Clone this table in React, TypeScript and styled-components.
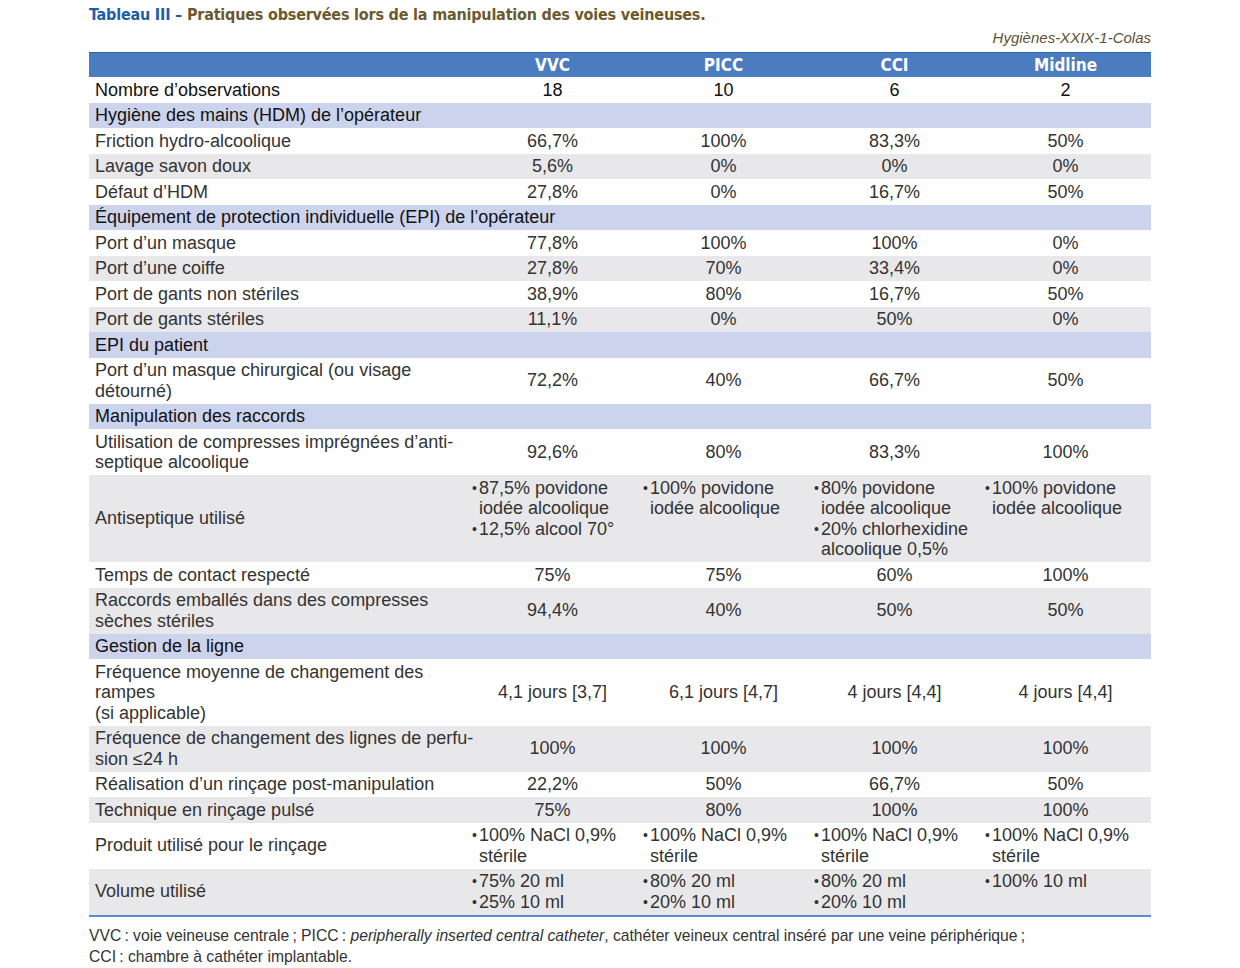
import React from "react";
import styled, { createGlobalStyle } from "styled-components";

const GlobalStyle = createGlobalStyle`
  html, body { margin: 0; padding: 0; background: #ffffff; }
  body { font-family: "Liberation Sans", Arial, sans-serif; color: #2b2b2b; }
`;

const Page = styled.div`
  width: 1062px;
  padding: 4px 0 0 89px;
`;

const Title = styled.h1`
  margin: 0;
  font-family: "DejaVu Sans Condensed", "Liberation Sans", sans-serif;
  font-stretch: condensed;
  font-weight: 700;
  font-size: 16px;
  letter-spacing: -0.2px;
  line-height: 22px;
  color: #6b5a2d;
`;

const TitleLead = styled.span`
  color: #1f5da8;
`;

const Source = styled.div`
  text-align: right;
  font-style: italic;
  font-size: 15px;
  line-height: 20px;
  color: #5e5130;
  margin-top: 2px;
`;

const Table = styled.table`
  width: 1062px;
  border-collapse: collapse;
  table-layout: fixed;
  margin-top: 4px;
  border-bottom: 2px solid #5a8bcc;
`;

const HeadRow = styled.tr`
  background: #4a7cbf;
  border-top: 1px solid #2f63ab;
`;

const HeadCell = styled.th`
  height: 24px;
  padding: 0;
  text-align: center;
  color: #ffffff;
  font-family: "DejaVu Sans Condensed", "Liberation Sans", sans-serif;
  font-stretch: condensed;
  font-weight: 700;
  font-size: 17px;
  line-height: 24px;
`;

type Tone = "plain" | "shade" | "section";

const Row = styled.tr<{ $tone: Tone }>`
  background: ${(p) =>
    p.$tone === "section" ? "#ccd3ec" : p.$tone === "shade" ? "#e8e7ea" : "#ffffff"};
`;

const LabelCell = styled.td<{ $strong?: boolean }>`
  padding: 2.5px 6px;
  font-size: 18px;
  line-height: 20.5px;
  white-space: nowrap;
  vertical-align: middle;
  color: ${(p) => (p.$strong ? "#111111" : "#333333")};
`;

const SectionCell = styled.td`
  padding: 2.5px 6px;
  font-size: 18px;
  line-height: 20.5px;
  color: #111111;
`;

const ValueCell = styled.td<{ $strong?: boolean }>`
  padding: 2.5px 0;
  font-size: 18px;
  line-height: 20.5px;
  text-align: center;
  vertical-align: middle;
  color: ${(p) => (p.$strong ? "#111111" : "#333333")};
`;

const BulletCell = styled.td`
  padding: 2.5px 4px 2.5px 5px;
  font-size: 18px;
  line-height: 20.5px;
  text-align: left;
  vertical-align: top;
  color: #333333;
`;

const BulletItem = styled.div`
  display: flex;
`;

const Dot = styled.span`
  flex: 0 0 7px;
  font-size: 14px;
`;

const Footer = styled.p`
  margin: 8px 0 0;
  font-size: 15.7px;
  line-height: 21px;
  color: #333333;
`;

type Value = string | string[];
type DataRow = { label: string[]; values: Value[] };
type Section = { title: string; rows: DataRow[] };

const sections: Section[] = [
  {
    title: "Hygiène des mains (HDM) de l’opérateur",
    rows: [
      { label: ["Friction hydro-alcoolique"], values: ["66,7%", "100%", "83,3%", "50%"] },
      { label: ["Lavage savon doux"], values: ["5,6%", "0%", "0%", "0%"] },
      { label: ["Défaut d’HDM"], values: ["27,8%", "0%", "16,7%", "50%"] },
    ],
  },
  {
    title: "Équipement de protection individuelle (EPI) de l’opérateur",
    rows: [
      { label: ["Port d’un masque"], values: ["77,8%", "100%", "100%", "0%"] },
      { label: ["Port d’une coiffe"], values: ["27,8%", "70%", "33,4%", "0%"] },
      { label: ["Port de gants non stériles"], values: ["38,9%", "80%", "16,7%", "50%"] },
      { label: ["Port de gants stériles"], values: ["11,1%", "0%", "50%", "0%"] },
    ],
  },
  {
    title: "EPI du patient",
    rows: [
      {
        label: ["Port d’un masque chirurgical (ou visage", "détourné)"],
        values: ["72,2%", "40%", "66,7%", "50%"],
      },
    ],
  },
  {
    title: "Manipulation des raccords",
    rows: [
      {
        label: ["Utilisation de compresses imprégnées d’anti-", "septique alcoolique"],
        values: ["92,6%", "80%", "83,3%", "100%"],
      },
      {
        label: ["Antiseptique utilisé"],
        values: [
          ["87,5% povidone iodée alcoolique", "12,5% alcool 70°"],
          ["100% povidone iodée alcoolique"],
          ["80% povidone iodée alcoolique", "20% chlorhexidine alcoolique 0,5%"],
          ["100% povidone iodée alcoolique"],
        ],
      },
      { label: ["Temps de contact respecté"], values: ["75%", "75%", "60%", "100%"] },
      {
        label: ["Raccords emballés dans des compresses", "sèches stériles"],
        values: ["94,4%", "40%", "50%", "50%"],
      },
    ],
  },
  {
    title: "Gestion de la ligne",
    rows: [
      {
        label: ["Fréquence moyenne de changement des", "rampes", "(si applicable)"],
        values: ["4,1 jours [3,7]", "6,1 jours [4,7]", "4 jours [4,4]", "4 jours [4,4]"],
      },
      {
        label: ["Fréquence de changement des lignes de perfu-", "sion ≤24 h"],
        values: ["100%", "100%", "100%", "100%"],
      },
      { label: ["Réalisation d’un rinçage post-manipulation"], values: ["22,2%", "50%", "66,7%", "50%"] },
      { label: ["Technique en rinçage pulsé"], values: ["75%", "80%", "100%", "100%"] },
      {
        label: ["Produit utilisé pour le rinçage"],
        values: [
          ["100% NaCl 0,9% stérile"],
          ["100% NaCl 0,9% stérile"],
          ["100% NaCl 0,9% stérile"],
          ["100% NaCl 0,9% stérile"],
        ],
      },
      {
        label: ["Volume utilisé"],
        values: [
          ["75% 20 ml", "25% 10 ml"],
          ["80% 20 ml", "20% 10 ml"],
          ["80% 20 ml", "20% 10 ml"],
          ["100% 10 ml"],
        ],
      },
    ],
  },
];

const columns = ["VVC", "PICC", "CCI", "Midline"];

const Label = ({ lines }: { lines: string[] }) => (
  <>
    {lines.map((l, i) => (
      <React.Fragment key={i}>
        {i > 0 && <br />}
        {l}
      </React.Fragment>
    ))}
  </>
);

const renderValue = (v: Value, key: number) =>
  Array.isArray(v) ? (
    <BulletCell key={key}>
      {v.map((item, i) => (
        <BulletItem key={i}>
          <Dot>•</Dot>
          <span>{item}</span>
        </BulletItem>
      ))}
    </BulletCell>
  ) : (
    <ValueCell key={key}>{v}</ValueCell>
  );

export default function App() {
  return (
    <>
      <GlobalStyle />
      <Page>
        <Title>
          <TitleLead>Tableau III –</TitleLead> Pratiques observées lors de la manipulation des voies veineuses.
        </Title>
        <Source>Hygiènes-XXIX-1-Colas</Source>
        <Table>
          <colgroup>
            <col style={{ width: "378px" }} />
            <col style={{ width: "171px" }} />
            <col style={{ width: "171px" }} />
            <col style={{ width: "171px" }} />
            <col style={{ width: "171px" }} />
          </colgroup>
          <thead>
            <HeadRow>
              <HeadCell />
              {columns.map((c) => (
                <HeadCell key={c}>{c}</HeadCell>
              ))}
            </HeadRow>
          </thead>
          <tbody>
            <Row $tone="plain">
              <LabelCell $strong>Nombre d’observations</LabelCell>
              {["18", "10", "6", "2"].map((n) => (
                <ValueCell key={n} $strong>
                  {n}
                </ValueCell>
              ))}
            </Row>
            {sections.map((s) => (
              <React.Fragment key={s.title}>
                <Row $tone="section">
                  <SectionCell colSpan={5}>{s.title}</SectionCell>
                </Row>
                {s.rows.map((r, i) => (
                  <Row key={i} $tone={i % 2 === 1 ? "shade" : "plain"}>
                    <LabelCell>
                      <Label lines={r.label} />
                    </LabelCell>
                    {r.values.map((v, k) => renderValue(v, k))}
                  </Row>
                ))}
              </React.Fragment>
            ))}
          </tbody>
        </Table>
        <Footer>
          VVC{"\u202F"}: voie veineuse centrale{"\u202F"}; PICC{"\u202F"}: <em>peripherally inserted central catheter</em>,
          cathéter veineux central inséré par une veine périphérique{"\u202F"};
          <br />
          CCI{"\u202F"}: chambre à cathéter implantable.
        </Footer>
      </Page>
    </>
  );
}
